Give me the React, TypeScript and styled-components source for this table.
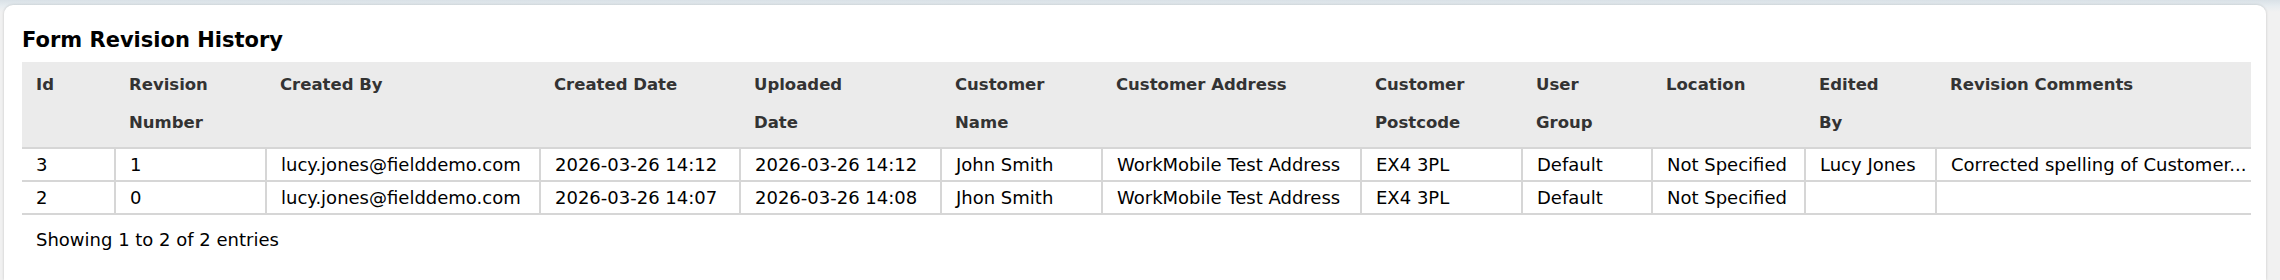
import React from "react";
import styled, { createGlobalStyle } from "styled-components";

const GlobalStyle = createGlobalStyle`
  html, body {
    margin: 0;
    padding: 0;
    background: #ffffff;
  }
  body {
    font-family: "DejaVu Sans", Verdana, sans-serif;
  }
`;

const Page = styled.div`
  width: 2280px;
  height: 280px;
  box-sizing: border-box;
  padding: 5px 14px 0 4px;
  background: linear-gradient(180deg, #d9e1e7 0px, #e6ecf0 6px, #f1f1f1 12px, #f1f1f1 100%);
  overflow: hidden;
`;

const Card = styled.div`
  height: 100%;
  box-sizing: border-box;
  background: #ffffff;
  border-radius: 9px 9px 0 0;
  box-shadow: 0 0 3px rgba(0, 0, 0, 0.18);
  padding: 21px 14px 0 18px;
`;

const Title = styled.h2`
  margin: 0 0 8px 0;
  font-size: 21px;
  line-height: 28px;
  font-weight: bold;
  color: #000;
`;

const Table = styled.table`
  width: 2229px;
  table-layout: fixed;
  border-collapse: collapse;
  font-size: 18px;
`;

const HeadCell = styled.th`
  background: #ebebeb;
  color: #333333;
  font-weight: bold;
  font-size: 16.5px;
  text-align: left;
  vertical-align: top;
  padding: 4px 10px 5px 14px;
  line-height: 38px;
  white-space: nowrap;
`;

const Cell = styled.td`
  border: 2px solid #d6d6d6;
  padding: 0 6px 0 14px;
  height: 31px;
  line-height: 31px;
  color: #000;
  white-space: nowrap;
  overflow: hidden;
  &:first-child { border-left: none; }
  &:last-child { border-right: none; }
`;

const Footer = styled.div`
  padding: 14px 0 0 14px;
  font-size: 18px;
  line-height: 22px;
  color: #000;
`;

const columns = [
  { label: "Id", width: 93 },
  { label: "Revision Number", width: 151, wrap: true },
  { label: "Created By", width: 274 },
  { label: "Created Date", width: 200 },
  { label: "Uploaded Date", width: 201, wrap: true },
  { label: "Customer Name", width: 161, wrap: true },
  { label: "Customer Address", width: 259 },
  { label: "Customer Postcode", width: 161, wrap: true },
  { label: "User Group", width: 130, wrap: true },
  { label: "Location", width: 153 },
  { label: "Edited By", width: 131, wrap: true },
  { label: "Revision Comments", width: 315 },
];

const rows = [
  ["3", "1", "lucy.jones@fielddemo.com", "2026-03-26 14:12", "2026-03-26 14:12", "John Smith", "WorkMobile Test Address", "EX4 3PL", "Default", "Not Specified", "Lucy Jones", "Corrected spelling of Customer..."],
  ["2", "0", "lucy.jones@fielddemo.com", "2026-03-26 14:07", "2026-03-26 14:08", "Jhon Smith", "WorkMobile Test Address", "EX4 3PL", "Default", "Not Specified", "", ""],
];

export default function App() {
  return (
    <>
      <GlobalStyle />
      <Page>
        <Card>
          <Title>Form Revision History</Title>
          <Table>
            <colgroup>
              {columns.map((c) => (
                <col key={c.label} style={{ width: c.width }} />
              ))}
            </colgroup>
            <thead>
              <tr>
                {columns.map((c) => {
                  const parts = c.label.split(" ");
                  return (
                    <HeadCell key={c.label}>
                      {c.wrap ? (
                        <>
                          {parts[0]}
                          <br />
                          {parts.slice(1).join(" ")}
                        </>
                      ) : (
                        c.label
                      )}
                    </HeadCell>
                  );
                })}
              </tr>
            </thead>
            <tbody>
              {rows.map((r, i) => (
                <tr key={i}>
                  {r.map((v, j) => (
                    <Cell key={j}>{v}</Cell>
                  ))}
                </tr>
              ))}
            </tbody>
          </Table>
          <Footer>Showing 1 to 2 of 2 entries</Footer>
        </Card>
      </Page>
    </>
  );
}
